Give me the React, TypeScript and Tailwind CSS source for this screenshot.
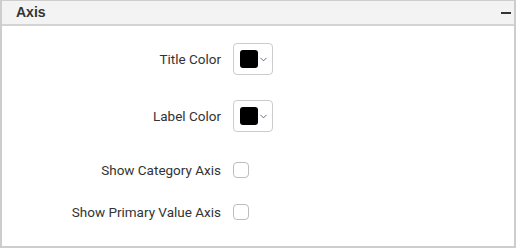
import { ChevronDown } from "lucide-react";

// Axis properties panel
const ColorPicker = () => (
    <button className="flex h-8 w-10 items-center rounded-[4px] border border-[#cccccc] bg-white pl-[6px]">
        <span className="h-[18px] w-[18px] rounded-[3px] bg-black" />
        <ChevronDown className="h-[11px] w-[11px] text-[#3f4d6b]" strokeWidth={1.75} />
    </button>
);

const CheckBox = () => (
    <span className="block h-4 w-4 rounded-[4px] border border-[#bdbdbd] bg-white" />
);

const Row = ({ label, className, children }: { label: string; className: string; children: React.ReactNode }) => (
    <div className={`flex items-center ${className}`}>
        <div className="w-[219px] text-right text-[13.5px] text-[#333]">{label}</div>
        <div className="ml-3">{children}</div>
    </div>
);

export default function App() {
    return (
        <div
            className="flex h-[248px] w-[516px] flex-col border-x-2 border-b-2 border-t border-[#cdcdcd] bg-white"
            style={{ fontFamily: "Roboto, 'Liberation Sans', sans-serif" }}
        >
            <div className="flex h-[25px] items-center justify-between border-b-2 border-[#d4d4d4] bg-[#f3f3f3] pl-[14px] pr-[3px]">
                <span className="text-[14px] font-bold text-[#333]" style={{ fontFamily: "'Liberation Sans', Arial, sans-serif" }}>
                    Axis
                </span>
                <span className="block h-[2px] w-[10px] bg-[#333]" />
            </div>
            <div className="flex flex-col pt-[17px]">
                <Row label="Title Color" className="h-8">
                    <ColorPicker />
                </Row>
                <Row label="Label Color" className="mt-[25px] h-8">
                    <ColorPicker />
                </Row>
                <Row label="Show Category Axis" className="mt-[30px] h-4">
                    <CheckBox />
                </Row>
                <Row label="Show Primary Value Axis" className="mt-[26px] h-4">
                    <CheckBox />
                </Row>
            </div>
        </div>
    );
}
